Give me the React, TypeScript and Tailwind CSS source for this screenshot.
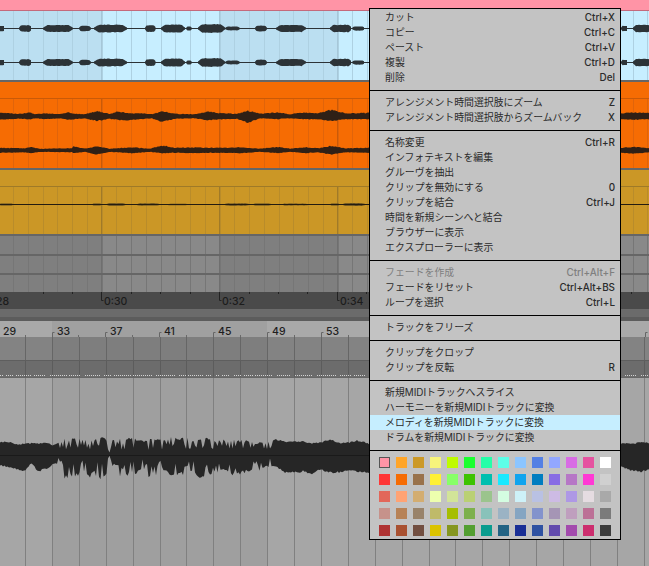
import { useMemo } from "react"

const W = 649

// tiny seeded noise so the waveforms stay the same on every load
function noise(seed: number) {
  let s = seed
  return () => {
    s = (s * 9301 + 49297) % 233280
    return s / 233280
  }
}

type Blob = [number, number, number]
type Key = [number, number, number]

function blobsPath(blobs: Blob[], cy: number, seed: number) {
  const rnd = noise(seed)
  let d = ""
  for (const [x0, x1, h] of blobs) {
    const top: string[] = []
    const bottom: string[] = []
    for (let x = x0; x <= x1; x += 1.5) {
      const t = (x - x0) / (x1 - x0)
      const edge = Math.min(1, Math.min(t, 1 - t) * 5 + 0.25)
      const up = h * edge * (0.88 + rnd() * 0.14)
      const down = h * edge * (0.88 + rnd() * 0.14)
      top.push(`${x} ${(cy + 0.5 - up).toFixed(1)}`)
      bottom.unshift(`${x} ${(cy + 0.5 + down).toFixed(1)}`)
    }
    d += `M${top.join("L")}L${bottom.join("L")}Z`
  }
  return d
}

function lerpKeys(keys: Key[], x: number) {
  let k = 0
  while (k < keys.length - 2 && keys[k + 1][0] < x) k++
  const a = keys[k]
  const b = keys[k + 1]
  const t = (x - a[0]) / (b[0] - a[0] || 1)
  return [a[1] + (b[1] - a[1]) * t, a[2] + (b[2] - a[2]) * t]
}

// continuous envelope from key points [x, up, down], with jitter
function envelopePath(keys: Key[], cy: number, seed: number, jitter: number) {
  const rnd = noise(seed)
  const top: string[] = []
  const bottom: string[] = []
  for (let x = keys[0][0]; x <= keys[keys.length - 1][0]; x += 1) {
    const [up, down] = lerpKeys(keys, x)
    top.push(`${x} ${(cy - up * (1 - jitter + rnd() * jitter)).toFixed(1)}`)
    bottom.unshift(`${x} ${(cy + down * (1 - jitter + rnd() * jitter)).toFixed(1)}`)
  }
  return `M${top.join("L")}L${bottom.join("L")}Z`
}

// the big vocal wave: smooth at both ends, sharp spikes between x 60 and 270
function combPath(keys: Key[], cy: number, seed: number) {
  const rnd = noise(seed)
  const top: string[] = []
  const bottom: string[] = []
  const x1 = keys[keys.length - 1][0]
  const pick = (spiky: boolean) => {
    const a = rnd()
    const b = rnd()
    if (!spiky) return 0.9 + b * 0.12
    return a < 0.7 ? 0.82 + b * 0.2 : 0.3 + b * 0.35
  }
  for (let x = keys[0][0]; x <= x1; x += 1.5) {
    const spiky = x > 58 && x < 272
    const [up, down] = lerpKeys(keys, x)
    top.push(`${x} ${(cy - up * pick(spiky)).toFixed(1)}`)
    bottom.unshift(`${x} ${(cy + down * pick(spiky)).toFixed(1)}`)
  }
  return `M${top.join("L")}L${bottom.join("L")}Z`
}

const BLUE_BLOBS: Blob[] = [
  [-2, 5, 2.8], [19, 32, 3.4], [43, 73, 3.6], [79, 91, 2.8], [94, 127, 4], [145, 156, 3.4],
  [161, 185, 4], [186, 192, 2], [198, 225, 4.4], [225, 240, 2], [255, 267, 3], [276, 306, 3.6],
  [330, 352, 3.8], [352, 365, 2.2], [621, 628, 2.8], [633, 652, 3.8],
]

const ORANGE_TOP: Key[] = [
  [0, 4, 3.5], [20, 3, 2.5], [30, 4.5, 3], [36, 2.5, 2], [45, 3.5, 3], [60, 2.5, 2], [68, 5, 4], [75, 3, 3],
  [85, 2.5, 2], [97, 6, 5], [110, 3, 2.5], [118, 5.5, 4], [130, 3.5, 4], [142, 3.5, 3], [152, 2.5, 2], [162, 6, 6],
  [175, 3, 2.5], [195, 2.5, 2], [207, 5.5, 4], [222, 3.5, 3], [237, 3, 2.5], [248, 6.5, 7], [260, 3, 2],
  [278, 4.5, 3], [290, 2.5, 2], [303, 4.5, 3], [318, 3.5, 3], [331, 7.5, 5], [345, 3.5, 3], [369, 4, 3],
]

const ORANGE_BOTTOM: Key[] = [
  [0, 3, 2.5], [25, 2.5, 2], [30, 4, 3], [40, 2, 1.5], [72, 2.5, 2], [73, 4.5, 3], [85, 2, 1.5], [97, 4.5, 4.5],
  [110, 2, 1.5], [132, 3.5, 3], [150, 2, 1.5], [162, 5.5, 3], [175, 3, 2.5], [197, 3.5, 3], [215, 3, 2.5],
  [240, 3.5, 3], [260, 2, 1.5], [278, 4, 3], [290, 2, 1.5], [305, 3.5, 3], [318, 2.5, 2], [331, 5, 4.5],
  [345, 2.5, 2], [369, 3, 2.5],
]

const MAIN_WAVE: Key[] = [
  [0, 13, 11], [8, 14, 12], [14, 12, 14], [20, 11, 16], [25, 12, 16], [32, 12, 8], [37, 12, 17], [48, 13, 14],
  [52, 10, 10], [60, 13, 8], [64, 20, 24], [67, 17, 23], [74, 17, 21], [78, 18, 22], [83, 16, 18], [90, 18, 25],
  [94, 15, 16], [98, 18, 25], [106, 17, 24], [108, 9, 4], [110, 0.6, 0.6], [112, 16, 11], [117, 15, 10], [120, 19, 23],
  [130, 17, 20], [138, 17, 18], [143, 14, 14], [146, 16, 23], [158, 16, 21], [162, 16, 14], [172, 18, 21], [178, 17, 20],
  [186, 18, 20], [192, 16, 16], [199, 17, 25], [206, 18, 20], [213, 15, 20], [224, 16, 14], [226, 15, 18], [236, 15, 21],
  [248, 15, 17], [252, 13, 16], [258, 13, 17], [266, 12, 12], [276, 16, 12], [285, 14, 18], [294, 14, 18], [303, 14, 17],
  [312, 12, 20], [320, 13, 15], [330, 16, 18], [340, 12, 18], [349, 13, 15], [358, 15, 17], [369, 12, 18],
]

const MAIN_RIGHT: Key[] = [
  [620, 12, 12], [628, 13, 15], [634, 12, 17], [642, 14, 18], [650, 12, 14],
]

const GRID_TOP = Array.from({ length: 45 }, (_, i) => 13.5 + i * 14.75)
const GRID_BOTTOM = Array.from({ length: 24 }, (_, i) => 25.5 + i * 26.9)
const MAJOR = [101.5, 219.5, 337.5]

function GridLines({ height, color, major }: { height: number; color: string; major?: string }) {
  return (
    <svg className="absolute inset-0" width={W} height={height}>
      {GRID_TOP.map((x) => (
        <rect key={x} x={Math.round(x - 0.5)} y={0} width={1} height={height} fill={color} />
      ))}
      {major && MAJOR.map((x) => <rect key={x} x={x - 0.5} y={0} width={1} height={height} fill={major} />)}
    </svg>
  )
}

function Bands({ dark, light }: { dark: string; light: string }) {
  return (
    <div className="absolute inset-0 flex">
      <div className={`w-[101px] ${dark}`} />
      <div className={`w-[118px] ${light}`} />
      <div className={`w-[118px] ${dark}`} />
      <div className={`flex-1 ${light}`} />
    </div>
  )
}

function Separator() {
  return <div className="h-[2px] bg-[#666666]" />
}

function BlueClip() {
  const a = useMemo(() => blobsPath(BLUE_BLOBS, 17, 7), [])
  const b = useMemo(() => blobsPath(BLUE_BLOBS, 51, 7), [])
  return (
    <div className="relative h-[69px]">
      <Bands dark="bg-[#bbdff1]" light="bg-[#c7eeff]" />
      <GridLines height={69} color="#aed1e2" major="#a6c7d8" />
      <svg className="absolute inset-0" width={W} height={69}>
        <path d={a} fill="#2c3337" />
        <path d={b} fill="#2c3337" />
        <rect x={0} y={17} width={W} height={1} fill="#2c3337" />
        <rect x={0} y={51} width={W} height={1} fill="#2c3337" />
      </svg>
    </div>
  )
}

function OrangeClip() {
  const a = useMemo(() => envelopePath(ORANGE_TOP, 17.5, 3, 0.22), [])
  const b = useMemo(() => envelopePath(ORANGE_BOTTOM, 51.5, 5, 0.22), [])
  const ra = useMemo(() => envelopePath([[620, 3.5, 3], [634, 4.5, 3.5], [650, 4, 3]], 17.5, 9, 0.22), [])
  const rb = useMemo(() => envelopePath([[620, 3, 2.5], [634, 4, 3.5], [650, 2.5, 2]], 51.5, 11, 0.22), [])
  return (
    <div className="bg-[#f66c03]">
      <div className="h-[17px] border-b border-[#c95a08]" />
      <div className="relative h-[69px]">
        <GridLines height={69} color="#e0640a" major="#c95a08" />
        <svg className="absolute inset-0" width={W} height={69}>
          {[a, b, ra, rb].map((d) => (
            <path key={d} d={d} fill="#2f2016" />
          ))}
        </svg>
      </div>
    </div>
  )
}

function OchreClip() {
  const smudges: Blob[] = [
    [-2, 14, 1], [92, 102, 1], [106, 126, 1.3], [136, 160, 1.2], [166, 190, 0.8], [224, 250, 1.2], [252, 272, 1],
    [280, 310, 0.9], [330, 340, 1], [342, 366, 1.4],
  ]
  return (
    <div className="bg-[#cb9726]">
      <div className="h-[17px] border-b border-[#9f7a28]" />
      <div className="relative h-[47px]">
        <GridLines height={47} color="#b98c2a" major="#a07a28" />
        <svg className="absolute inset-0" width={W} height={47}>
          <path d={blobsPath(smudges, 17, 2)} fill="#5c4a22" />
          <rect x={0} y={17} width={W} height={1} fill="#241c10" />
        </svg>
      </div>
    </div>
  )
}

function GrayRow({ height, className }: { height: number; className: string }) {
  return (
    <div className={`relative ${className}`}>
      <Bands dark="bg-[#7f7f7f]" light="bg-[#898989]" />
      <GridLines height={height} color="#767676" major="#6f6f6f" />
    </div>
  )
}

function TimeRuler() {
  const minor = [43, 72, 131, 160, 190, 249, 278, 307, 366, 631]
  return (
    <div className="relative h-[17px] bg-[#4a4a4a] text-[10.5px] font-medium leading-[17px] text-[#1c1c1c]">
      <svg className="absolute inset-0" width={W} height={17}>
        {minor.map((x) => (
          <rect key={x} x={x} y={0} width={1} height={2} fill="#222222" />
        ))}
        {MAJOR.map((x) => (
          <path key={x} d={`M${x} 0V8.5H${x + 2}`} stroke="#222222" fill="none" />
        ))}
      </svg>
      <span className="absolute left-[-4px] top-[1px]">28</span>
      <span className="absolute left-[104px] top-[1px]">0:30</span>
      <span className="absolute left-[222px] top-[1px]">0:32</span>
      <span className="absolute left-[340px] top-[1px]">0:34</span>
    </div>
  )
}

function BarRuler() {
  const labels: [string, number][] = [["29", 3], ["33", 57], ["37", 110], ["41", 164], ["45", 218], ["49", 272], ["53", 326]]
  const ticks = [25, 52, 78, 105, 132, 159, 186, 213, 240, 267, 294, 321, 348, 645]
  const major = [52, 105, 159, 213, 267, 321, 645]
  return (
    <div className="relative flex h-[16px] text-[10.5px] font-medium leading-[16px] text-[#1e1e1e]">
      <div className="w-[52px] bg-[#a9a9a9]" />
      <div className="w-[215px] bg-[#a0a0a0]" />
      <div className="flex-1 bg-[#a9a9a9]" />
      <svg className="absolute inset-0" width={W} height={16}>
        {ticks.map((x) =>
          major.includes(x) ? (
            <path key={x} d={`M${x + 0.5} 16V11.5H${x + 2.5}`} stroke="#666666" fill="none" />
          ) : (
            <rect key={x} x={x} y={14} width={1} height={2} fill="#6a6a6a" />
          ),
        )}
      </svg>
      {labels.map(([t, x]) => (
        <span key={t} className="absolute top-[3px]" style={{ left: x }}>
          {t}
        </span>
      ))}
    </div>
  )
}

function DetailGridLines({ height, color }: { height: number; color: string }) {
  return (
    <svg className="absolute inset-0" width={W} height={height}>
      {GRID_BOTTOM.map((x) => (
        <rect key={x} x={Math.round(x - 0.5)} y={0} width={1} height={height} fill={color} />
      ))}
    </svg>
  )
}

function DetailHeader() {
  // transient markers: short dashes with irregular gaps
  const dots = useMemo(() => {
    const rnd = noise(21)
    const out: number[] = []
    let x = 0
    while (x < W) {
      const run = 2 + Math.floor(rnd() * 9)
      for (let i = 0; i < run; i++) out.push(x + i * 2)
      x += run * 2 + 1 + Math.floor(rnd() * 4)
    }
    return out
  }, [])
  return (
    <>
      <div className="relative flex h-[23px]">
        <div className="w-[52px] bg-[#838383]" />
        <div className="w-[215px] bg-[#7e7e7e]" />
        <div className="flex-1 bg-[#838383]" />
        <DetailGridLines height={23} color="#666666" />
      </div>
      <div className="relative h-[17px] border-t border-[#5e5e5e] bg-[#6c6c6c]">
        <DetailGridLines height={16} color="#5c5c5c" />
        <svg className="absolute inset-0" width={W} height={16}>
          {dots.map((x) => (
            <rect key={x} x={x} y={14} width={1} height={1} fill="#d4d4d4" />
          ))}
        </svg>
      </div>
    </>
  )
}

function MainWave() {
  const d = useMemo(() => combPath(MAIN_WAVE, 77, 13), [])
  const r = useMemo(() => envelopePath(MAIN_RIGHT, 77, 17, 0.12), [])
  return (
    <div className="relative flex-1 overflow-hidden border-t border-[#666666]">
      <div className="absolute inset-0 flex">
        <div className="w-[52px] bg-[#a6a6a6]" />
        <div className="w-[215px] bg-[#9f9f9f]" />
        <div className="flex-1 bg-[#a6a6a6]" />
      </div>
      <DetailGridLines height={190} color="#808080" />
      <svg className="absolute inset-0" width={W} height={190}>
        <path d={d} fill="#262626" />
        <path d={r} fill="#262626" />
        <rect x={0} y={77} width={369} height={1} fill="#1a1a1a" />
      </svg>
    </div>
  )
}

type MenuItem = { label: string; keys?: string; disabled?: boolean; active?: boolean }

const MENU: MenuItem[][] = [
  [
    { label: "カット", keys: "Ctrl+X" },
    { label: "コピー", keys: "Ctrl+C" },
    { label: "ペースト", keys: "Ctrl+V" },
    { label: "複製", keys: "Ctrl+D" },
    { label: "削除", keys: "Del" },
  ],
  [
    { label: "アレンジメント時間選択肢にズーム", keys: "Z" },
    { label: "アレンジメント時間選択肢からズームバック", keys: "X" },
  ],
  [
    { label: "名称変更", keys: "Ctrl+R" },
    { label: "インフォテキストを編集" },
    { label: "グルーヴを抽出" },
    { label: "クリップを無効にする", keys: "0" },
    { label: "クリップを結合", keys: "Ctrl+J" },
    { label: "時間を新規シーンへと結合" },
    { label: "ブラウザーに表示" },
    { label: "エクスプローラーに表示" },
  ],
  [
    { label: "フェードを作成", keys: "Ctrl+Alt+F", disabled: true },
    { label: "フェードをリセット", keys: "Ctrl+Alt+BS" },
    { label: "ループを選択", keys: "Ctrl+L" },
  ],
  [{ label: "トラックをフリーズ" }],
  [
    { label: "クリップをクロップ" },
    { label: "クリップを反転", keys: "R" },
  ],
  [
    { label: "新規MIDIトラックへスライス" },
    { label: "ハーモニーを新規MIDIトラックに変換" },
    { label: "メロディを新規MIDIトラックに変換", active: true },
    { label: "ドラムを新規MIDIトラックに変換" },
  ],
]

const SWATCHES = [
  "#ff94a6", "#ffa529", "#cc9927", "#f7f47c", "#bffb00", "#1aff2f", "#25ffa8", "#5cffe8", "#8bc5ff", "#5480e4", "#92a7ff", "#d86ce4", "#e553a0", "#ffffff",
  "#ff3636", "#f66c03", "#99724b", "#fff034", "#87ff67", "#3dc300", "#00bfaf", "#19e9ff", "#10a4ee", "#007dc0", "#886ce4", "#b677c6", "#ff39d4", "#d0d0d0",
  "#e2675a", "#ffa374", "#d3ad71", "#edffae", "#d2e498", "#bad074", "#9bc48d", "#d4fde1", "#cdf1f8", "#b9c1e3", "#cdbbe4", "#ae98e5", "#e5dce1", "#a9a9a9",
  "#c6928b", "#b78256", "#99836a", "#bfba69", "#a6be00", "#7db04d", "#88c2ba", "#9bb3c4", "#85a5c2", "#8393cc", "#a595b5", "#bf9fbe", "#bc7196", "#7b7b7b",
  "#af3333", "#a95131", "#724f41", "#dbc300", "#85961f", "#539f31", "#0a9c8e", "#236384", "#1a2f96", "#2f52a2", "#624bad", "#a34bad", "#cc2e6e", "#3c3c3c",
]

function ContextMenu() {
  return (
    <div className="absolute left-[369px] top-[8px] w-[252px] border border-black bg-[#c3c3c3] font-['Inter','Noto_Sans_CJK_JP',sans-serif] text-[9.9px] text-[#2b2b2b]">
      {MENU.map((group, i) => (
        <div key={i} className="border-b border-black pt-[4px] pb-[5px] first:pt-[1px]">
          {group.map((item) => (
            <div
              key={item.label}
              className={`flex h-[15px] items-center justify-between pl-[15px] pr-[5px] leading-[15px] ${
                item.active ? "bg-[#c6eeff]" : ""
              } ${item.disabled ? "text-[#7f7f7f]" : ""}`}
            >
              <span>{item.label}</span>
              {item.keys && <span className="font-medium">{item.keys}</span>}
            </div>
          ))}
        </div>
      ))}
      <div className="grid grid-cols-[repeat(14,11px)] gap-[6px] pl-[9px] pt-[6px] pb-[3px]">
        {SWATCHES.map((c, i) => (
          <div key={i} className={`h-[11px] w-[11px] ${i === 0 ? "border border-[#555555]" : ""}`} style={{ backgroundColor: c }} />
        ))}
      </div>
    </div>
  )
}

export default function App() {
  return (
    <div className="relative flex h-[566px] w-[649px] flex-col overflow-hidden bg-[#a6a6a6] font-['Inter',sans-serif]">
      <div className="h-[11px] border-b border-[#c46a7c] bg-[#ff94a6]" />
      <BlueClip />
      <Separator />
      <OrangeClip />
      <Separator />
      <OchreClip />
      <Separator />
      <GrayRow height={18} className="h-[18px]" />
      <Separator />
      <GrayRow height={17} className="h-[17px]" />
      <Separator />
      <GrayRow height={17} className="h-[17px]" />
      <TimeRuler />
      <div className="h-[8px] bg-[#6b6b6b]" />
      <div className="h-[4px] bg-[#5c5c5c]" />
      <BarRuler />
      <DetailHeader />
      <MainWave />
      <ContextMenu />
    </div>
  )
}
